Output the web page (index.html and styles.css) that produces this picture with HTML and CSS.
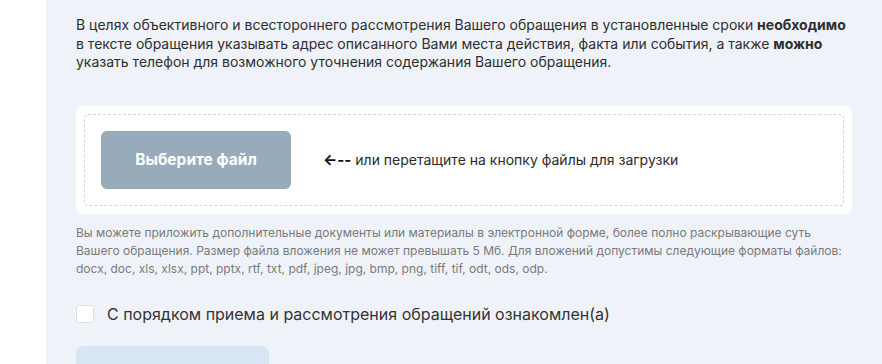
FILE: index.html
```html
<!DOCTYPE html>
<html lang="ru">
<head>
    <meta charset="UTF-8">
    <meta name="viewport" content="width=device-width, initial-scale=1.0">
    <title>Обращение</title>
    <link rel="stylesheet" href="styles.css">
</head>
<body>
    <div class="page">
        <div class="panel">
            <p class="notice">
                В целях объективного и всестороннего рассмотрения Вашего обращения в установленные сроки <b>необходимо</b>
                в тексте обращения указывать адрес описанного Вами места действия, факта или события, а также <b>можно</b>
                указать телефон для возможного уточнения содержания Вашего обращения.
            </p>

            <!-- File upload -->
            <div class="upload-card">
                <div class="upload-zone">
                    <button class="file-button">Выберите файл</button>
                    <span class="upload-hint"><span class="arrow">&larr;--</span> или перетащите на кнопку файлы для загрузки</span>
                </div>
            </div>

            <p class="help">
                Вы можете приложить дополнительные документы или материалы в электронной форме, более полно раскрывающие суть<br>
                Вашего обращения. Размер файла вложения не может превышать 5 Мб. Для вложений допустимы следующие форматы файлов:<br>
                docx, doc, xls, xlsx, ppt, pptx, rtf, txt, pdf, jpeg, jpg, bmp, png, tiff, tif, odt, ods, odp.
            </p>

            <label class="agree">
                <span class="check"></span>
                С порядком приема и рассмотрения обращений ознакомлен(а)
            </label>

            <button class="submit-button"></button>
        </div>
    </div>
</body>
</html>
```

FILE: styles.css
```css
body {
    margin: 0;
    font-family: 'Inter', 'Noto Sans', sans-serif;
    color: #2b2b2b;
    background: #fff;
}

.page {
    padding-left: 46px;
    height: 364px;
    overflow: hidden;
}

.panel {
    background-color: #eff3f9;
    padding: 16px 30px 0 30px;
    height: 100%;
    box-sizing: border-box;
}

.notice {
    margin: 0;
    font-size: 14px;
    line-height: 18.5px;
    color: #2e2e2e;
}

.notice b {
    font-weight: 700;
}

.upload-card {
    margin-top: 34px;
    background-color: #fff;
    border-radius: 6px;
    padding: 8px;
}

.upload-zone {
    border: 1px dashed #d6d6d6;
    border-radius: 4px;
    padding: 16px 16px;
    display: flex;
    align-items: center;
}

.file-button {
    width: 190px;
    height: 58px;
    border: none;
    border-radius: 6px;
    background-color: #98abba;
    color: #fff;
    font-family: inherit;
    font-size: 15.5px;
    font-weight: 700;
}

.upload-hint {
    margin-left: 32px;
    font-size: 14px;
    color: #2b2b2b;
}

.arrow {
    font-weight: 700;
    font-size: 15px;
    color: #111;
}

.help {
    margin: 10px 0 0 0;
    font-size: 12px;
    line-height: 18px;
    color: #7a7a7a;
    white-space: nowrap;
}

.agree {
    display: flex;
    align-items: center;
    margin-top: 26px;
    font-size: 16px;
    color: #333;
}

.check {
    width: 16px;
    height: 16px;
    background-color: #fff;
    border: 1px solid #dcdfe4;
    border-radius: 3px;
    margin-right: 13px;
}

.submit-button {
    display: block;
    margin-top: 22px;
    width: 193px;
    height: 50px;
    border: none;
    border-radius: 8px;
    background-color: #d7e5f4;
}
```
